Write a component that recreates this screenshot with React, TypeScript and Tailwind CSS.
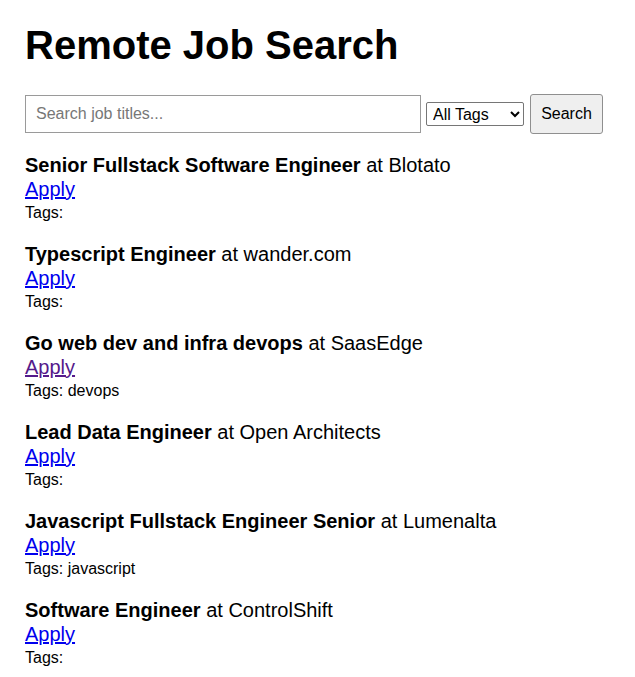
import { useState } from "react";

const jobs = [
  { title: "Senior Fullstack Software Engineer", company: "Blotato", tags: "" },
  { title: "Typescript Engineer", company: "wander.com", tags: "" },
  { title: "Go web dev and infra devops", company: "SaasEdge", tags: "devops", visited: true },
  { title: "Lead Data Engineer", company: "Open Architects", tags: "" },
  { title: "Javascript Fullstack Engineer Senior", company: "Lumenalta", tags: "javascript" },
  { title: "Software Engineer", company: "ControlShift", tags: "" },
];

export default function App() {
  const [query, setQuery] = useState("");

  return (
    <div className="min-h-[677px] bg-white px-[25px] pt-[22px] text-black font-['Liberation_Sans',Arial,sans-serif]">
      <h1 className="text-[40px] font-bold leading-[46px]">Remote Job Search</h1>

      {/* Search bar */}
      <div className="mt-[26px] flex items-center">
        <input
          value={query}
          onChange={(e) => setQuery(e.target.value)}
          placeholder="Search job titles..."
          className="h-[38px] w-[396px] border border-[#9a9a9a] px-[10px] text-[16px] placeholder:text-[#777] outline-none"
        />
        <select className="ml-[5px] h-[24px] w-[98px] rounded-[2px] border border-[#767676] bg-white pl-[2px] text-[16px]">
          <option>All Tags</option>
          <option>devops</option>
          <option>javascript</option>
        </select>
        <button className="ml-[6px] h-[40px] w-[73px] rounded-[3px] border border-[#8f8f8f] bg-[#efefef] text-[16px]">
          Search
        </button>
      </div>

      {/* Results */}
      <div className="mt-[20px] flex flex-col gap-[21px]">
        {jobs.map((job) => (
          <div key={job.title}>
            <div className="text-[20px] leading-[23px]">
              <strong className="font-bold">{job.title}</strong> at {job.company}
            </div>
            <a
              href="#"
              className={`block w-fit text-[20px] leading-[24px] underline ${job.visited ? "text-[#551a8b]" : "text-[#0000ee]"}`}
            >
              Apply
            </a>
            <div className="pt-[3px] text-[16px] leading-[18px]">Tags: {job.tags}</div>
          </div>
        ))}
      </div>
    </div>
  );
}
